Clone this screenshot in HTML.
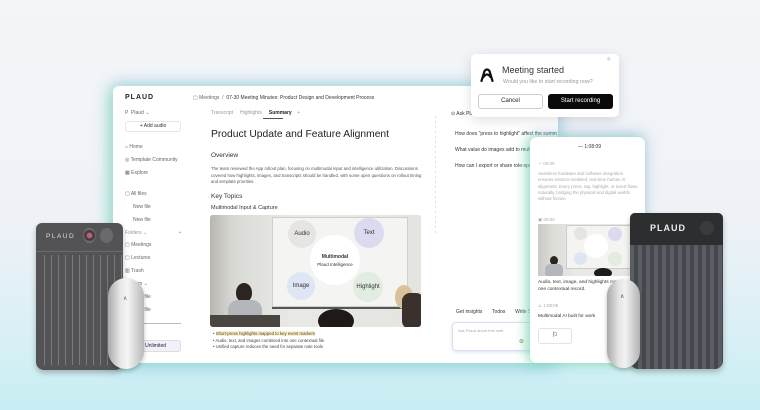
<!DOCTYPE html>
<html><head><meta charset="utf-8">
<style>
*{margin:0;padding:0;box-sizing:border-box}
body{width:760px;height:410px;overflow:hidden;font-family:"Liberation Sans",sans-serif;background:linear-gradient(180deg,#f3f5f8 0%,#eef2f7 55%,#d6f0f5 85%,#c6eef4 100%);position:relative;color:#222}
.abs{position:absolute}
.win{left:113px;top:86px;width:445px;height:277px;background:#fff;border-radius:6px;box-shadow:-4px 0 14px rgba(120,230,160,.55),0 -4px 14px rgba(150,170,255,.35),0 6px 16px rgba(120,190,240,.4)}
.t{position:absolute;white-space:nowrap}
.s5{font-size:5px;color:#666}
.phone{left:530px;top:137px;width:115px;height:226px;background:#fff;border-radius:7px;box-shadow:-3px 0 12px rgba(110,230,150,.7),0 -3px 12px rgba(170,160,255,.5)}
.photo{overflow:hidden;background:linear-gradient(90deg,#c9c9c4 0%,#dcdcd8 15%,#e9e9e6 40%,#e4e4e0 100%)}
.circ{position:absolute;border-radius:50%;display:flex;align-items:center;justify-content:center;font-size:6px;color:#333}
</style></head><body>

<div class="abs win">
  <div class="t" style="left:12px;top:8px;font-size:7px;font-weight:bold;letter-spacing:1px;color:#222">PLAUD</div>
  <div class="t s5" style="left:80px;top:9px">▢ Meetings &nbsp;/&nbsp; <span style="color:#333">07-30 Meeting Minutes: Product Design and Development Process</span></div>
  <div class="t s5" style="left:12px;top:24px">P &nbsp;Plaud ⌄</div>
  <div class="abs" style="left:12px;top:35px;width:56px;height:11px;border:1px solid #e6e6e6;border-radius:3px;font-size:5px;color:#333;text-align:center;line-height:9px">+ Add audio</div>
  <div class="t s5" style="left:12px;top:58px">⌂ Home</div>
  <div class="t s5" style="left:12px;top:71px">◎ Template Community</div>
  <div class="t s5" style="left:12px;top:84px">▦ Explore</div>
  <div class="t s5" style="left:12px;top:105px">▢ All files</div>
  <div class="t s5" style="left:20px;top:118px">New file</div>
  <div class="t s5" style="left:20px;top:131px">New file</div>
  <div class="t s5" style="left:12px;top:144px;color:#999">Folders ⌄ <span style="margin-left:30px">+</span></div>
  <div class="t s5" style="left:12px;top:156px">▢ Meetings</div>
  <div class="t s5" style="left:12px;top:169px">▢ Lectures</div>
  <div class="t s5" style="left:12px;top:182px">▥ Trash</div>
  <div class="t s5" style="left:12px;top:195px">Custom ⌄</div>
  <div class="t s5" style="left:20px;top:208px">New file</div>
  <div class="t s5" style="left:20px;top:221px">New file</div>
  <div class="abs" style="left:12px;top:237px;width:56px;height:1px;background:#bbb"></div>
  <div class="t s5" style="left:12px;top:244px;color:#999">Plan</div>
  <div class="abs" style="left:12px;top:254px;width:56px;height:12px;border:1px solid #ddd;border-radius:3px;background:#f3f0fb;font-size:5px;line-height:10px;padding-left:10px">Pro Unlimited</div>

  <div class="t s5" style="left:98px;top:24px;color:#999">Transcript &nbsp;&nbsp;&nbsp; Highlights &nbsp;&nbsp;&nbsp; <span style="color:#222;font-weight:bold">Summary</span> &nbsp;&nbsp; +</div>
  <div class="abs" style="left:150px;top:32px;width:20px;height:1px;background:#555"></div>
  <div class="t" style="left:98px;top:43px;font-size:10.3px;color:#222">Product Update and Feature Alignment</div>
  <div class="t" style="left:98px;top:66px;font-size:6.5px;color:#333">Overview</div>
  <div class="t" style="left:98px;top:80px;font-size:4.3px;color:#555;line-height:6.7px;white-space:normal;width:215px">The team reviewed the App rollout plan, focusing on multimodal input and intelligence utilization. Discussions covered how highlights, images, and transcripts should be handled, with some open questions on rollout timing and template priorities.</div>
  <div class="t" style="left:98px;top:107px;font-size:6.5px;color:#333">Key Topics</div>
  <div class="t" style="left:98px;top:119px;font-size:5.5px;color:#333">Multimodal Input &amp; Capture</div>
  <div class="abs photo" style="left:97px;top:129px;width:211px;height:112px;border-radius:3px">
    <div class="abs" style="left:0;top:0;width:22px;height:112px;background:linear-gradient(90deg,#b8b6b0,#d8d7d2)"></div>
    <div class="abs" style="left:62px;top:2px;width:136px;height:90px;background:#f4f4f2;border:1px solid #cfcfcb;box-shadow:0 2px 0 #555"></div>
    <div class="circ" style="left:78px;top:5px;width:28px;height:28px;background:#e6e5e3">Audio</div>
    <div class="circ" style="left:144px;top:3px;width:30px;height:30px;background:#dcdaee">Text</div>
    <div class="circ" style="left:100px;top:20px;width:50px;height:50px;background:#fff;flex-direction:column;font-size:5px"><b>Multimodal</b><span style="font-size:4.5px;margin-top:2px">Plaud Intelligence</span></div>
    <div class="circ" style="left:77px;top:57px;width:28px;height:28px;background:#dfe6f3">Image</div>
    <div class="circ" style="left:143px;top:57px;width:30px;height:30px;background:#e2ece0">Highlight</div>
    <div class="abs" style="left:26px;top:68px;width:16px;height:19px;border-radius:50% 50% 45% 45%;background:#2b2420"></div>
    <div class="abs" style="left:18px;top:85px;width:34px;height:30px;border-radius:10px 10px 0 0;background:#b3b6ba"></div>
    <div class="abs" style="left:0;top:100px;width:70px;height:12px;background:#4a4540"></div>
    <div class="abs" style="left:108px;top:94px;width:36px;height:24px;border-radius:50%;background:#1d1a18"></div>
    <div class="abs" style="left:185px;top:70px;width:18px;height:24px;border-radius:50%;background:#d9c29a"></div>
    <div class="abs" style="left:192px;top:78px;width:22px;height:36px;border-radius:8px;background:#3a302c"></div>
  </div>
  <div class="t" style="left:100px;top:245px;font-size:4.3px;color:#444;line-height:6.5px">• <span style="background:#fcf0c8">Short-press highlights mapped to key event markers</span><br>• Audio, text, and images combined into one contextual file<br>• Unified capture reduces the need for separate note tools</div>

  <div class="abs" style="left:322px;top:30px;width:1px;height:120px;background:repeating-linear-gradient(#ddd 0 2px,transparent 2px 5px)"></div>
  <div class="t s5" style="left:338px;top:25px;color:#333">⊙ Ask Plaud</div>
  <div class="t s5" style="left:342px;top:45px;color:#333">How does "press to highlight" affect the summ</div>
  <div class="t s5" style="left:342px;top:61px;color:#333">What value do images add to multimo</div>
  <div class="t s5" style="left:342px;top:77px;color:#333">How can I export or share role-speech</div>
  <div class="t s5" style="left:343px;top:223px;color:#333">Get insights &nbsp;&nbsp;&nbsp;&nbsp;&nbsp; Todos &nbsp;&nbsp;&nbsp;&nbsp;&nbsp; Write S</div>
  <div class="abs" style="left:339px;top:236px;width:90px;height:29px;border:1px solid #dde;border-radius:4px;box-shadow:0 1px 3px rgba(140,150,230,.3)"><div class="t" style="left:5px;top:5px;font-size:4px;color:#aaa">Ask Plaud about this note</div><div class="t" style="left:66px;top:15px;font-size:6px;color:#777">⊛</div></div>
</div>

<div class="abs phone">
  <div class="t s5" style="left:48px;top:7px;color:#333">— 1:08:09</div>
  <div class="t" style="left:8px;top:24px;font-size:4.5px;color:#aaa">⚐ 00:00</div>
  <div class="t" style="left:8px;top:34px;font-size:4.3px;color:#aaa;white-space:normal;width:100px;line-height:6.3px">Seamless hardware and software integration ensures session-modeled, real-time human AI alignment. Every press, tap, highlight, or insert flows naturally, bridging the physical and digital worlds without friction.</div>
  <div class="t" style="left:8px;top:80px;font-size:4.5px;color:#aaa">▣ 00:00</div>
  <div class="abs photo" style="left:8px;top:87px;width:100px;height:52px">
    <div class="abs" style="left:28px;top:1px;width:70px;height:44px;background:#f4f4f2;border:1px solid #ccc"></div>
    <div class="circ" style="left:36px;top:3px;width:13px;height:13px;background:#e6e5e3"></div>
    <div class="circ" style="left:70px;top:3px;width:14px;height:14px;background:#dcdaee"></div>
    <div class="circ" style="left:46px;top:10px;width:24px;height:24px;background:#fff"></div>
    <div class="circ" style="left:36px;top:28px;width:13px;height:13px;background:#dfe6f3"></div>
    <div class="circ" style="left:70px;top:28px;width:14px;height:14px;background:#e2ece0"></div>
    <div class="abs" style="left:12px;top:32px;width:8px;height:9px;border-radius:50%;background:#2b2420"></div>
    <div class="abs" style="left:7px;top:40px;width:18px;height:14px;border-radius:5px;background:#b3b6ba"></div>
    <div class="abs" style="left:56px;top:44px;width:18px;height:10px;border-radius:50%;background:#1d1a18"></div>
  </div>
  <div class="t" style="left:8px;top:143px;font-size:4.8px;color:#333;line-height:6.5px">Audio, text, image, and highlights merge into<br>one contextual record.</div>
  <div class="t" style="left:8px;top:166px;font-size:4.5px;color:#aaa">∠ 1:08:09</div>
  <div class="t" style="left:8px;top:177px;font-size:4.8px;color:#333">Multimodal AI built for work</div>
  <div class="abs" style="left:8px;top:191px;width:34px;height:16px;border:1px solid #e3e3e3;border-radius:3px;font-size:7px;text-align:center;line-height:14px">⚐</div>
</div>

<div class="abs" style="left:471px;top:54px;width:148px;height:63px;background:#fff;border-radius:5px;box-shadow:0 3px 12px rgba(0,0,0,.13)">
  <svg class="abs" style="left:9px;top:14px" width="14" height="14" viewBox="0 0 14 14"><path d="M1.5 13 L4.5 3 Q7 0 9.5 3 L12.5 13 M3.5 9 Q7 4 10.5 9" fill="none" stroke="#111" stroke-width="2.2" stroke-linecap="round"/></svg>
  <div class="t" style="left:31px;top:11px;font-size:9px;color:#333">Meeting started</div>
  <div class="t" style="left:32px;top:25px;font-size:5.3px;color:#999">Would you like to start recording now?</div>
  <div class="t" style="left:136px;top:3px;font-size:6px;color:#aaa">⌾</div>
  <div class="abs" style="left:7px;top:40px;width:65px;height:15px;border:1px solid #ccc;border-radius:3px;font-size:6px;text-align:center;line-height:13px;color:#222">Cancel</div>
  <div class="abs" style="left:77px;top:40px;width:65px;height:15px;background:#0a0a0a;border-radius:3px;font-size:6px;text-align:center;line-height:15px;color:#fff">Start recording</div>
</div>

<!-- left device -->
<div class="abs" style="left:36px;top:223px;width:87px;height:147px;border-radius:6px 6px 8px 8px;background:#535355;box-shadow:0 3px 6px rgba(0,0,0,.25);overflow:hidden">
  <div class="abs" style="left:0;top:28px;width:87px;height:1px;background:#6a6a6c"></div>
  <div class="abs" style="left:2px;top:32px;width:84px;height:110px;background:repeating-linear-gradient(90deg,transparent 0 6px,#7a7a7c 6px 7px)"></div>
  <div class="t" style="left:10px;top:10px;font-size:6.5px;color:#ddd;letter-spacing:1.5px">PLAUD</div>
  <div class="abs" style="left:47px;top:5px;width:13px;height:15px;border-radius:50%;background:radial-gradient(circle,#c06080 20%,#333 40%,#777 70%)"></div>
  <div class="abs" style="left:64px;top:5px;width:13px;height:15px;border-radius:50%;background:#6a6a6c"></div>
</div>
<div class="abs" style="left:108px;top:278px;width:36px;height:91px;border-radius:18px;background:linear-gradient(90deg,#a8a8a8 0%,#e8e8e8 35%,#f4f4f4 55%,#b8b8b8 100%);box-shadow:0 2px 4px rgba(0,0,0,.25)">
  <div class="t" style="left:15px;top:17px;font-size:6px;color:#666">∧</div>
</div>

<!-- right device -->
<div class="abs" style="left:630px;top:213px;width:93px;height:156px;border-radius:5px 5px 8px 8px;background:repeating-linear-gradient(90deg,#5a5d63 0 4px,#44474c 4px 8px);box-shadow:0 3px 6px rgba(0,0,0,.25)">
  <div class="abs" style="left:0;top:0;width:93px;height:32px;border-radius:5px 5px 0 0;background:#2d2e30"></div>
  <div class="t" style="left:20px;top:10px;font-size:9px;color:#eee;letter-spacing:1px;font-weight:bold">PLAUD</div>
  <div class="abs" style="left:70px;top:8px;width:14px;height:14px;border-radius:50%;background:#3a3b3d"></div>
</div>
<div class="abs" style="left:607px;top:279px;width:33px;height:89px;border-radius:17px;background:linear-gradient(90deg,#a8a8a8 0%,#e4e4e4 35%,#f2f2f2 55%,#b3b3b3 100%);box-shadow:0 2px 4px rgba(0,0,0,.25)">
  <div class="t" style="left:13px;top:14px;font-size:6px;color:#555">∧</div>
</div>

</body></html>
